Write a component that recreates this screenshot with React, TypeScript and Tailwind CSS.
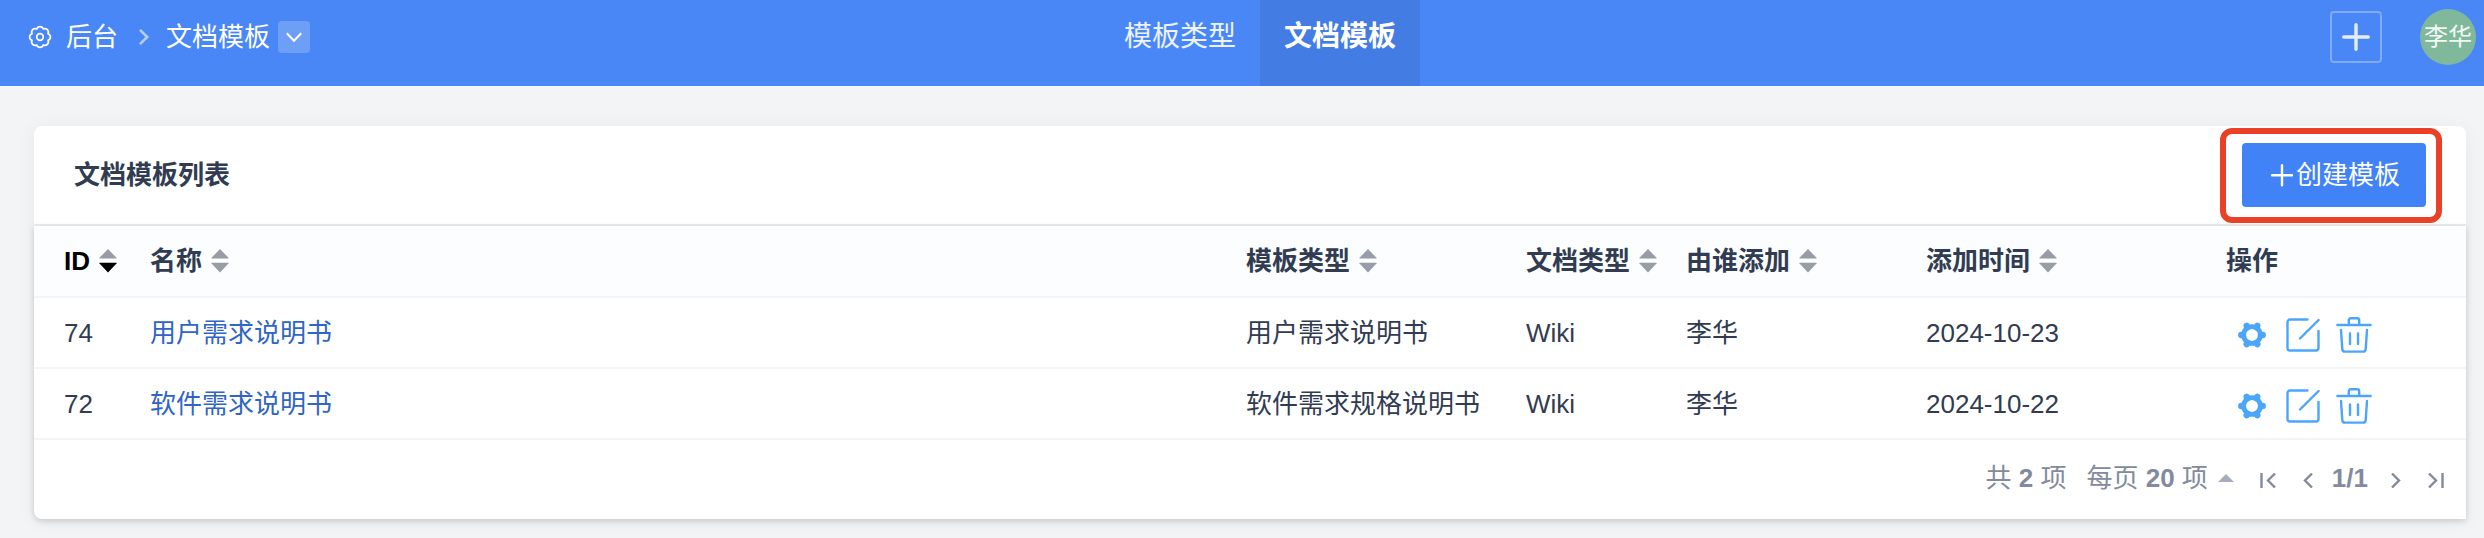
import React from 'react';

const templates = [
  { id: 74, name: '用户需求说明书', type: '用户需求说明书', docType: 'Wiki', addedBy: '李华', addedDate: '2024-10-23' },
  { id: 72, name: '软件需求说明书', type: '软件需求规格说明书', docType: 'Wiki', addedBy: '李华', addedDate: '2024-10-22' },
];

const columns = [
  { label: 'ID', width: 'w-[108px]', sorted: true },
  { label: '名称', width: '' },
  { label: '模板类型', width: 'w-[280px]' },
  { label: '文档类型', width: 'w-[160px]' },
  { label: '由谁添加', width: 'w-[240px]' },
  { label: '添加时间', width: 'w-[300px]' },
];

function CogOutline() {
  return (
    <svg viewBox="0 0 24 24" className="w-6 h-6" fill="none" stroke="currentColor" strokeWidth="1.7" strokeLinejoin="round">
      <path d="M8.7 4 C9.8 .8 14.2 .8 15.3 4 C18.3 2.5 21.5 5.7 20 8.7 C23.2 9.8 23.2 14.2 20 15.3 C21.5 18.3 18.3 21.5 15.3 20 C14.2 23.2 9.8 23.2 8.7 20 C5.7 21.5 2.5 18.3 4 15.3 C.8 14.2 .8 9.8 4 8.7 C2.5 5.7 5.7 2.5 8.7 4Z" />
      <circle cx="12" cy="12" r="3.3" />
    </svg>
  );
}

function CogSolid() {
  return (
    <svg viewBox="0 0 28 28" className="w-7 h-7" fill="none" stroke="currentColor">
      <circle cx="14" cy="14" r="8.4" strokeWidth="4.8" />
      <path
        d="M5 14H3.3M23 14h1.7M9.5 6.2l-.8-1.4M18.5 6.2l.8-1.4M9.5 21.8l-.8 1.4M18.5 21.8l.8 1.4"
        strokeWidth="6.4"
        strokeLinecap="round"
      />
    </svg>
  );
}

function EditIcon() {
  return (
    <svg viewBox="0 0 34 34" className="w-[34px] h-[34px]" fill="none" stroke="currentColor" strokeWidth="2.4" strokeLinecap="round" strokeLinejoin="round">
      <path d="M21.5 1.5H4A2.5 2.5 0 0 0 1.5 4v26A2.5 2.5 0 0 0 4 32.5h26a2.5 2.5 0 0 0 2.5-2.5V13" />
      <path d="M14 20.5L32.6 2" />
    </svg>
  );
}

function TrashIcon() {
  return (
    <svg viewBox="0 0 36 36" className="w-9 h-9" fill="none" stroke="currentColor" strokeWidth="2.4" strokeLinecap="round" strokeLinejoin="round">
      <path d="M1.4 8h33.2" />
      <path d="M12.8 7.5V3.2a2 2 0 0 1 2-2h6.4a2 2 0 0 1 2 2v4.3" />
      <path d="M5 13l1.3 19.1A2.7 2.7 0 0 0 9 34.6h18a2.7 2.7 0 0 0 2.7-2.5L31 13" />
      <path d="M14 16.5v10.5M22 16.5v10.5" />
    </svg>
  );
}

function SortIcon({ sorted }: { sorted?: boolean }) {
  return (
    <svg viewBox="0 0 18 24" className="w-[18px] h-6">
      <path d="M.5 9.6V8.8L9 0l8.5 8.8v.8Z" fill="#989ca7" />
      <path d="M.5 13.8v.8L9 23.6l8.5-9v-.8Z" fill={sorted ? '#000' : '#989ca7'} />
    </svg>
  );
}

function PagerIcon({ d }: { d: string }) {
  return (
    <svg viewBox="0 0 16 16" className="w-4 h-4" fill="none" stroke="currentColor" strokeWidth="2.4">
      <path d={d} />
    </svg>
  );
}

export default function App() {
  return (
    <div className="min-h-screen bg-[#f3f4f6] text-[26px] leading-9 text-[#313c52] font-['Liberation_Sans','Noto_Sans_CJK_SC',sans-serif]">
      <header className="grid grid-cols-[1fr_auto_1fr] h-[86px] bg-[#4987f6] text-white pl-7 pr-2">
        <div className="flex items-center pb-3">
          <a href="#admin" className="flex items-center gap-[14px]">
            <CogOutline />
            <span>后台</span>
          </a>
          <svg viewBox="0 0 20 20" className="w-5 h-5 ml-4 mr-3 opacity-60" fill="none" stroke="currentColor" strokeWidth="2.6">
            <path d="M6 2.8l7.2 7.2L6 17.2" />
          </svg>
          <a href="#templates">文档模板</a>
          <button aria-label="切换" className="flex items-center justify-center w-8 h-8 ml-2 rounded bg-white/20">
            <svg viewBox="0 0 16 16" className="w-4 h-4" fill="none" stroke="currentColor" strokeWidth="2">
              <path d="M.8 4.2L8 11.8l7.2-7.6" />
            </svg>
          </button>
        </div>
        <nav className="flex ml-4 text-[28px]">
          <a href="#types" className="flex items-center px-6 pb-3 text-white/90">模板类型</a>
          <a href="#templates" className="flex items-center px-6 pb-3 font-bold bg-[#437ce3]">文档模板</a>
        </nav>
        <div className="flex items-center justify-end gap-[38px] pb-3">
          <button aria-label="新建" className="flex items-center justify-center w-[52px] h-[52px] rounded border-2 border-white/30 text-white/85">
            <svg viewBox="0 0 28 28" className="w-7 h-7" fill="none" stroke="currentColor" strokeWidth="3.4" strokeLinecap="round">
              <path d="M14 1.7v24.6M1.7 14h24.6" />
            </svg>
          </button>
          <button className="flex items-center justify-center w-14 h-14 rounded-full bg-[#80b89c] text-2xl text-white/90">李华</button>
        </div>
      </header>

      <main className="pt-10 pl-[34px] pr-[18px] pb-4">
        <section className="rounded-lg rounded-br-none bg-white shadow-[0_2px_20px_rgba(0,0,0,0.05)]">
          <div className="flex items-center justify-between h-[100px] px-10 border-b-2 border-[#ebecee]">
            <h1 className="font-bold">文档模板列表</h1>
            <div className="relative">
              <button className="flex items-center h-16 px-[26px] rounded bg-[#4182f6] text-white">
                <svg viewBox="0 0 28 28" className="w-7 h-7" fill="none" stroke="currentColor" strokeWidth="2.4" strokeLinecap="round">
                  <path d="M14 4.2v20M4 14.2h20" />
                </svg>
                创建模板
              </button>
              <span className="absolute -top-[15px] -left-[22px] -right-4 -bottom-4 rounded-xl border-6 border-[#ea4025] pointer-events-none" />
            </div>
          </div>

          <div className="rounded-bl-lg shadow-[0_2px_6px_rgba(0,0,0,0.16)]">
            <table className="w-full table-fixed border-collapse text-left whitespace-nowrap">
              <thead className="bg-[#fcfdfe]">
                <tr className="h-[71px] border-b-2 border-[#f3f4f6]">
                  {columns.map((col) => (
                    <th key={col.label} className={`${col.width} p-0 pl-2 first:pl-[30px] font-bold`}>
                      <button className={`flex items-center gap-[9px] ${col.sorted ? 'text-black' : ''}`}>
                        {col.label}
                        <SortIcon sorted={col.sorted} />
                      </button>
                    </th>
                  ))}
                  <th className="w-[248px] p-0 pl-2 font-bold">操作</th>
                </tr>
              </thead>
              <tbody>
                {templates.map((row) => (
                  <tr key={row.id} className="h-[71px] border-b-2 border-[#f3f4f6]">
                    <td className="p-0 pl-[30px]">{row.id}</td>
                    <td className="p-0 pl-2">
                      <a href={`#template-${row.id}`} className="text-[#2f65c4]">{row.name}</a>
                    </td>
                    <td className="p-0 pl-2">{row.type}</td>
                    <td className="p-0 pl-2">{row.docType}</td>
                    <td className="p-0 pl-2">{row.addedBy}</td>
                    <td className="p-0 pl-2">{row.addedDate}</td>
                    <td className="p-0 pl-5 pt-1">
                      <div className="flex items-center gap-4 text-[#4ba6fb]">
                        <button aria-label="设置" className="mr-1"><CogSolid /></button>
                        <button aria-label="编辑"><EditIcon /></button>
                        <button aria-label="删除"><TrashIcon /></button>
                      </div>
                    </td>
                  </tr>
                ))}
              </tbody>
            </table>

            <footer className="flex items-center justify-end h-[79px] pr-[22px] pb-1 text-[#838a9d]">
              <span className="mr-5">共 <b>2</b> 项</span>
              <button className="flex items-center gap-[10px] mr-[26px]">
                <span>每页 <b>20</b> 项</span>
                <svg viewBox="0 0 16 8" className="w-4 h-2 opacity-70" fill="currentColor">
                  <path d="M0 8L8 0l8 8Z" />
                </svg>
              </button>
              <div className="flex items-center">
                <button aria-label="首页" className="mr-6 pt-1"><PagerIcon d="M1.5 1v15M15 1.5L8 8.5l7 7" /></button>
                <button aria-label="上一页" className="mr-4 pt-1"><PagerIcon d="M12 1.5L5 8.5l7 7" /></button>
                <b>1/1</b>
                <button aria-label="下一页" className="ml-5 mr-6 pt-1"><PagerIcon d="M4 1.5l7 7-7 7" /></button>
                <button aria-label="末页" className="pt-1"><PagerIcon d="M1 1.5l7 7-7 7M14.5 1v15" /></button>
              </div>
            </footer>
          </div>
        </section>
      </main>
    </div>
  );
}
